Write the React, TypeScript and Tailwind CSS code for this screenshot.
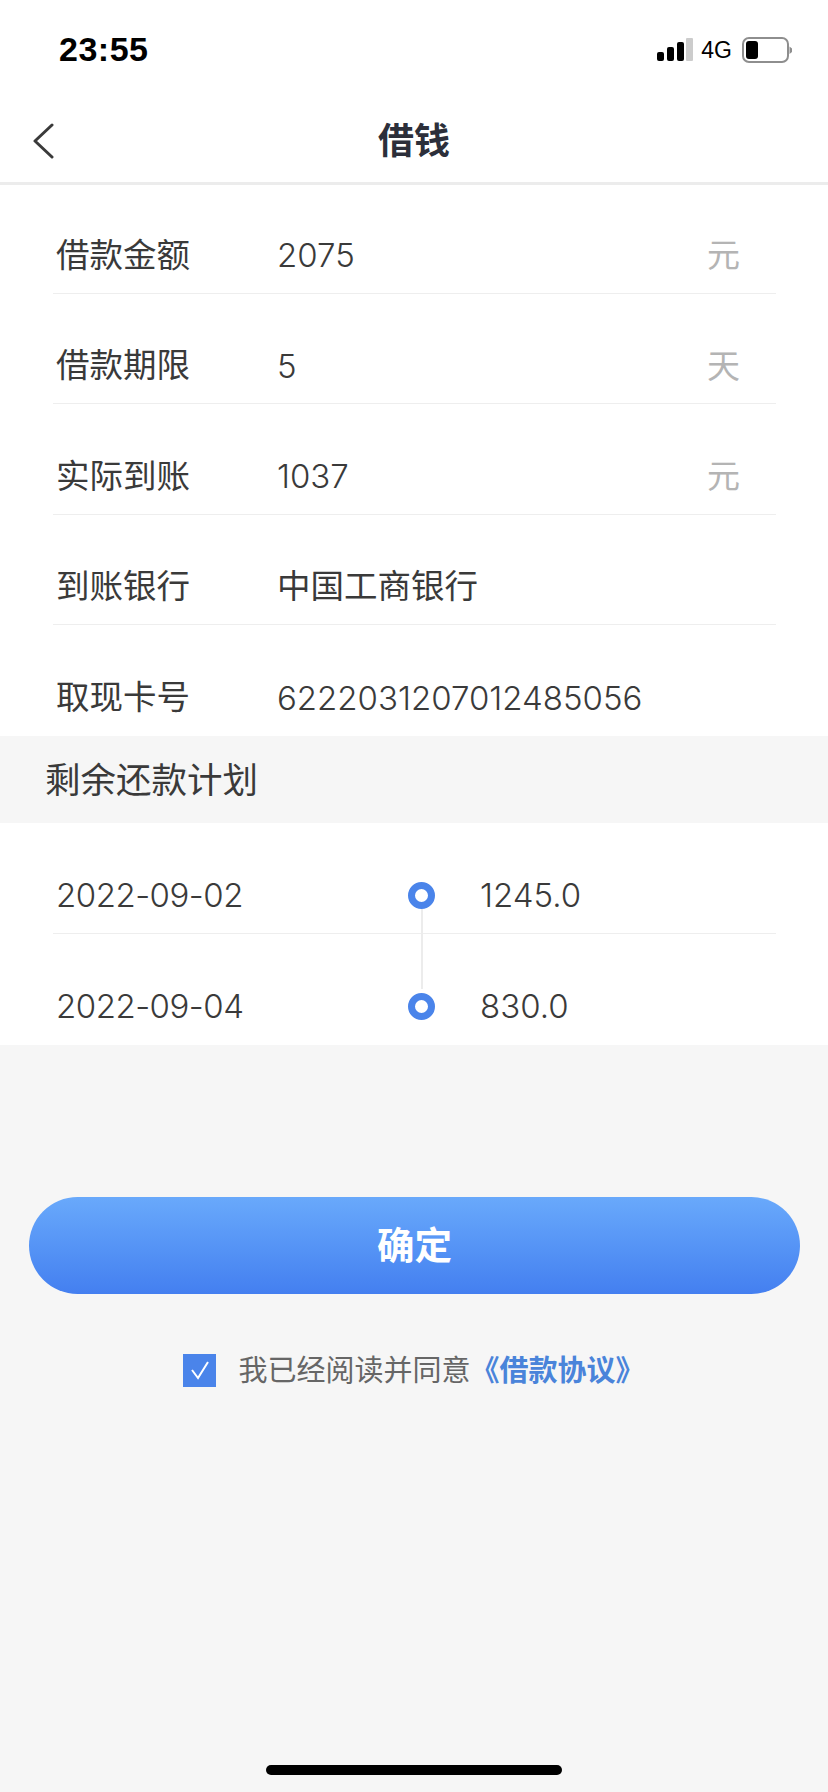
const font = "font-['Liberation_Sans','Noto_Sans_CJK_SC',sans-serif]";
const digits = "font-['Inter','Noto_Sans_CJK_SC',sans-serif] text-[33px] font-light";

function InfoRow({ label, value, unit, cjk, last }: { label: string; value: string; unit?: string; cjk?: boolean; last?: boolean }) {
  return (
    <div className={`ml-[53px] w-[723px] h-[110.5px] flex items-center pt-[36px] pl-[3px] pr-[36px] ${last ? "" : "border-b border-[#eeeeee]"}`}>
      <span className="w-[221px] text-[33.5px] text-[#3a3a3a]">{label}</span>
      <span className={`flex-1 text-[#3a3a3a] ${cjk ? "text-[33.5px]" : digits}`}>{value}</span>
      {unit && <span className="text-[33px] text-[#b4b4b4]">{unit}</span>}
    </div>
  );
}

function PlanRow({ date, amount, last }: { date: string; amount: string; last?: boolean }) {
  return (
    <div className={`ml-[53px] w-[723px] h-[110.5px] flex items-center pt-[36px] pl-[3px] ${last ? "" : "border-b border-[#eeeeee]"}`}>
      <span className={`w-[352px] text-[#3a3a3a] tracking-[-0.5px] ${digits}`}>{date}</span>
      <div className="w-[27px] h-[27px] rounded-full border-[7px] border-[#4a84ea] bg-white relative z-10" />
      <span className={`ml-[45px] text-[#3a3a3a] ${digits}`}>{amount}</span>
    </div>
  );
}

export default function App() {
  return (
    <div className={`${font} w-[828px] h-[1792px] bg-[#f6f6f6] flex flex-col overflow-hidden relative`}>
      {/* Status Bar */}
      <div className="h-[92px] bg-white flex justify-between items-start pt-[29px] pl-[59px] pr-[36px]">
        <span className="text-[34px] leading-[40px] font-bold text-black tracking-[0.5px]">23:55</span>
        <div className="flex items-center gap-[8px] h-[40px] mt-[1px]">
          <svg width="36" height="24" viewBox="0 0 36 24">
            <rect x="0" y="14" width="7" height="9" rx="2" fill="#000" />
            <rect x="10" y="9" width="7" height="14" rx="2" fill="#000" />
            <rect x="20" y="4" width="7" height="19" rx="2" fill="#000" />
            <rect x="29" y="0" width="7" height="23" rx="1" fill="#cccccc" />
          </svg>
          <span className="text-[23px] text-black mr-[2px]">4G</span>
          <svg width="50" height="26" viewBox="0 0 50 26">
            <rect x="1" y="1" width="45" height="24" rx="6" fill="none" stroke="#8e8e8e" strokeWidth="2" />
            <rect x="4" y="4" width="12" height="18" rx="3" fill="#000" />
            <path d="M47.5 9.5 L50 11.5 L50 15 L47.5 17 Z" fill="#8e8e8e" />
          </svg>
        </div>
      </div>

      {/* Navigation Bar */}
      <nav className="h-[93px] bg-white border-b-[3px] border-[#ececec] relative flex items-center justify-center">
        <svg className="absolute left-[32px] top-[31px]" width="22" height="36" viewBox="0 0 22 36" fill="none">
          <path d="M20 2L3 18L20 34" stroke="#3a3a3a" strokeWidth="3" strokeLinecap="round" strokeLinejoin="round" />
        </svg>
        <span className="text-[36px] font-bold text-[#2c2f3a] mt-[10px]">借钱</span>
      </nav>

      {/* Loan Info */}
      <div className="bg-white h-[553px] -mt-[2px]">
        <InfoRow label="借款金额" value="2075" unit="元" />
        <InfoRow label="借款期限" value="5" unit="天" />
        <InfoRow label="实际到账" value="1037" unit="元" />
        <InfoRow label="到账银行" value="中国工商银行" cjk />
        <InfoRow label="取现卡号" value="6222031207012485056" last />
      </div>

      {/* Plan */}
      <div className="h-[87px] flex items-center pl-[45px] pt-[4px] text-[35.5px] text-[#3a3a3a]">剩余还款计划</div>
      <div className="bg-white h-[222px] relative">
        <PlanRow date="2022-09-02" amount="1245.0" />
        <PlanRow date="2022-09-04" amount="830.0" last />
        <div className="absolute left-[421px] top-[86px] w-[2px] h-[80px] bg-[#ececec]" />
      </div>

      {/* Confirm */}
      <button className="mt-[152px] ml-[29px] w-[771px] h-[97px] rounded-full bg-gradient-to-b from-[#69a9fb] to-[#447ff0] text-white text-[37.5px] font-bold pt-[2px]">
        确定
      </button>

      {/* Agreement */}
      <div className="mt-[56px] flex items-center justify-center">
        <div className="w-[33px] h-[33px] bg-[#4a84ea] flex items-center justify-center -mt-[3px]">
          <svg width="20" height="20" viewBox="0 0 20 20" fill="none">
            <path d="M2 10L8 18L18 2" stroke="#fff" strokeWidth="2" />
          </svg>
        </div>
        <span className="ml-[22px] text-[29px] text-[#666666]">我已经阅读并同意</span>
        <span className="text-[29px] font-bold text-[#4a84da]">《借款协议》</span>
      </div>

      {/* Home Indicator */}
      <div className="absolute left-[266px] bottom-[17px] w-[296px] h-[10px] rounded-full bg-black" />
    </div>
  );
}
